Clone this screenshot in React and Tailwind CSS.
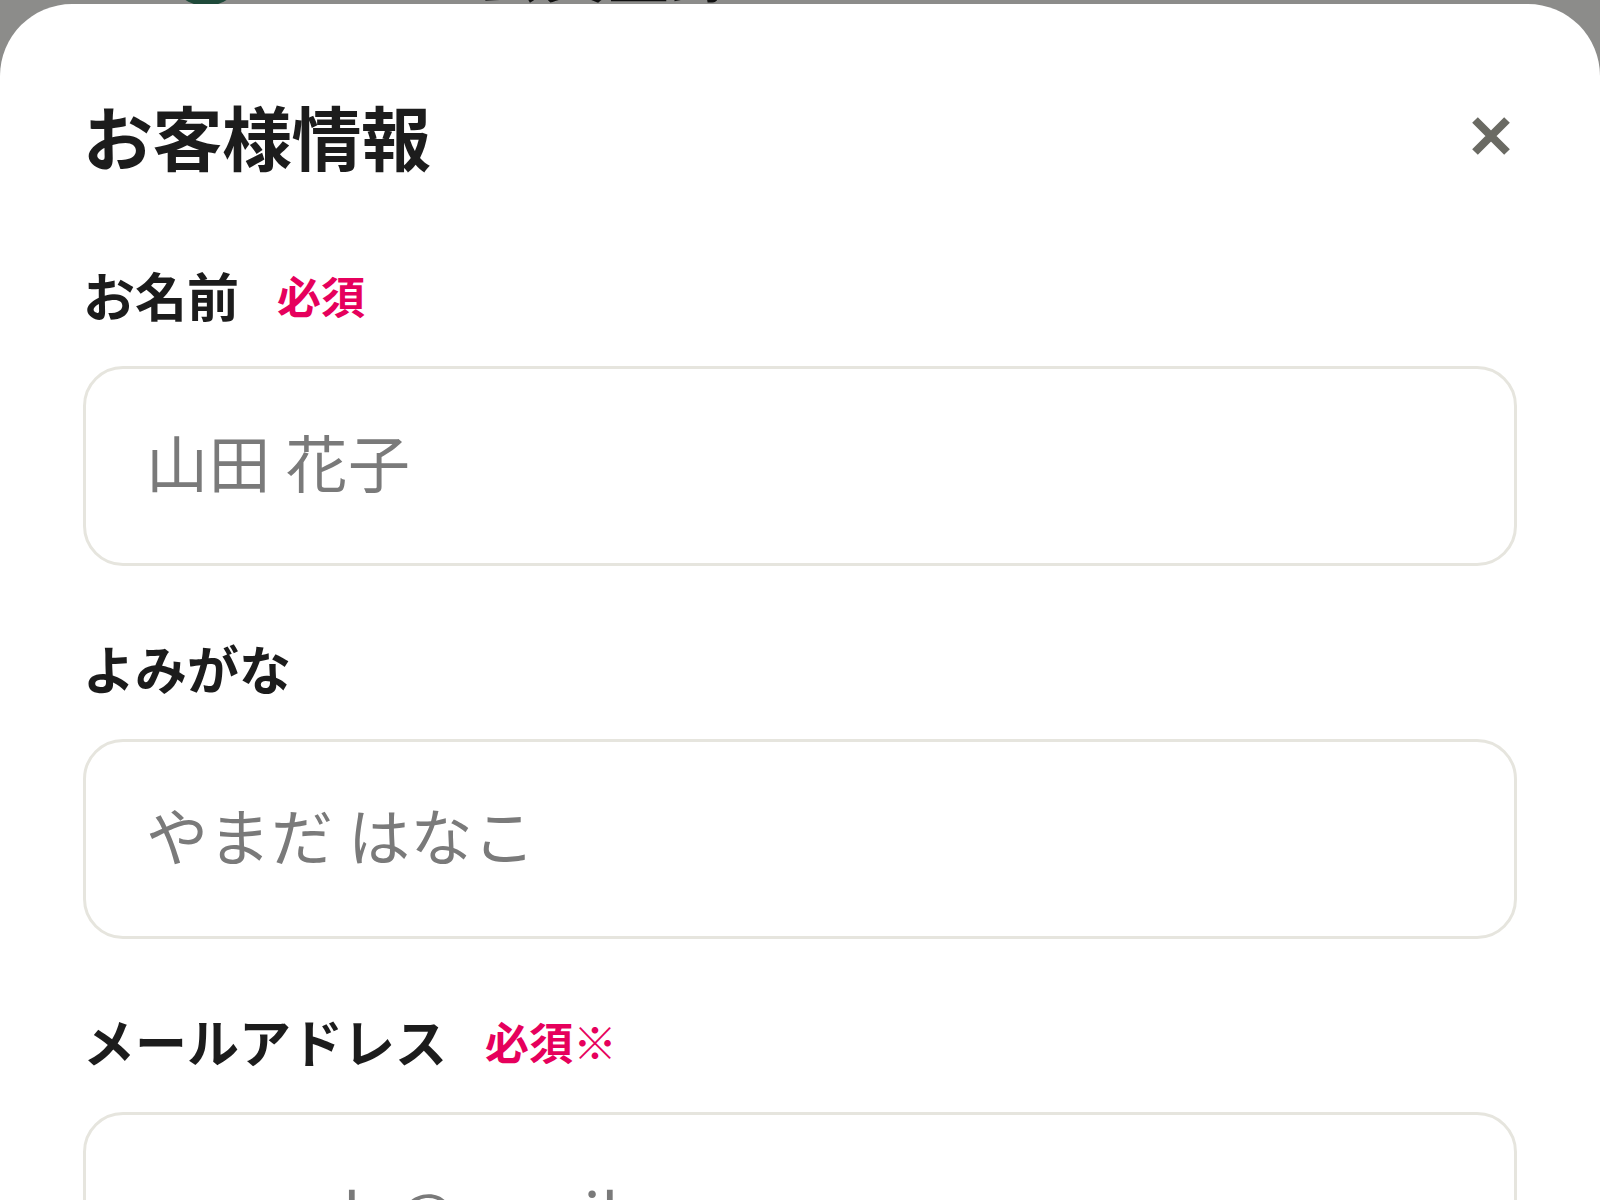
import { useState } from 'react'

const fields = [
  { key: 'name', label: 'お名前', badge: '必須', placeholder: '山田 花子', type: 'text', pad: 'pb-[10px]' },
  { key: 'kana', label: 'よみがな', badge: null, placeholder: 'やまだ はなこ', type: 'text', pad: 'pb-[10px]' },
  { key: 'email', label: 'メールアドレス', badge: '必須※', placeholder: 'example@email.com', type: 'email', pad: 'pb-0' },
]

function CloseIcon() {
  return (
    <svg viewBox="0 0 40 40" className="h-[40px] w-[40px]" aria-hidden="true">
      <path d="M4 4 L36 36 M36 4 L4 36" stroke="#6a6a63" strokeWidth="8" strokeLinecap="butt" />
    </svg>
  )
}

function Field({ field, value, onChange }) {
  return (
    <div className="flex flex-col">
      <div className="flex items-center gap-[38px] leading-none">
        <span className="text-[52px] font-bold text-[#1c1c1c]">{field.label}</span>
        {field.badge && (
          <span className="text-[44px] font-bold text-[#e6005c]">{field.badge}</span>
        )}
      </div>
      <input
        type={field.type}
        value={value}
        onChange={(e) => onChange(field.key, e.target.value)}
        placeholder={field.placeholder}
        className={`mt-[45px] h-[200px] w-full rounded-[40px] border-[3px] border-[#e6e5de] bg-white pl-[60px] text-[62px] tracking-[0.5px] text-[#222] outline-none placeholder:text-[#7a7a7a] ${field.pad}`}
      />
    </div>
  )
}

export default function App() {
  const [values, setValues] = useState({ name: '', kana: '', email: '' })
  const update = (key, v) => setValues((prev) => ({ ...prev, [key]: v }))

  return (
    <div
      className="h-[1200px] overflow-hidden bg-[#8c8c8a]"
      style={{ fontFamily: '"Noto Sans CJK JP", "Noto Sans", sans-serif' }}
    >
      {/* backdrop peeking above the sheet */}
      <div className="relative h-[4px] overflow-hidden">
        <div className="absolute left-[168px] top-[-70px] h-[76px] w-[76px] rounded-full bg-[#1f4a3a]" />
        <div className="absolute left-[336px] top-[-64px] text-[64px] font-bold leading-none text-[#111]">
          ＜ 　会員登録について
        </div>
      </div>

      {/* Sheet */}
      <div className="h-full rounded-t-[72px] bg-white px-[83px]">
        <div className="flex items-center justify-between pt-[97px]">
          <h2 className="text-[70px] font-bold leading-none tracking-[-0.5px] text-[#1c1c1c]">お客様情報</h2>
          <button type="button" className="mr-[6px] flex items-center justify-center" aria-label="閉じる">
            <CloseIcon />
          </button>
        </div>

        <div className="mt-[98px] flex flex-col gap-[76px]">
          {fields.map((f) => (
            <Field key={f.key} field={f} value={values[f.key]} onChange={update} />
          ))}
        </div>
      </div>
    </div>
  )
}
